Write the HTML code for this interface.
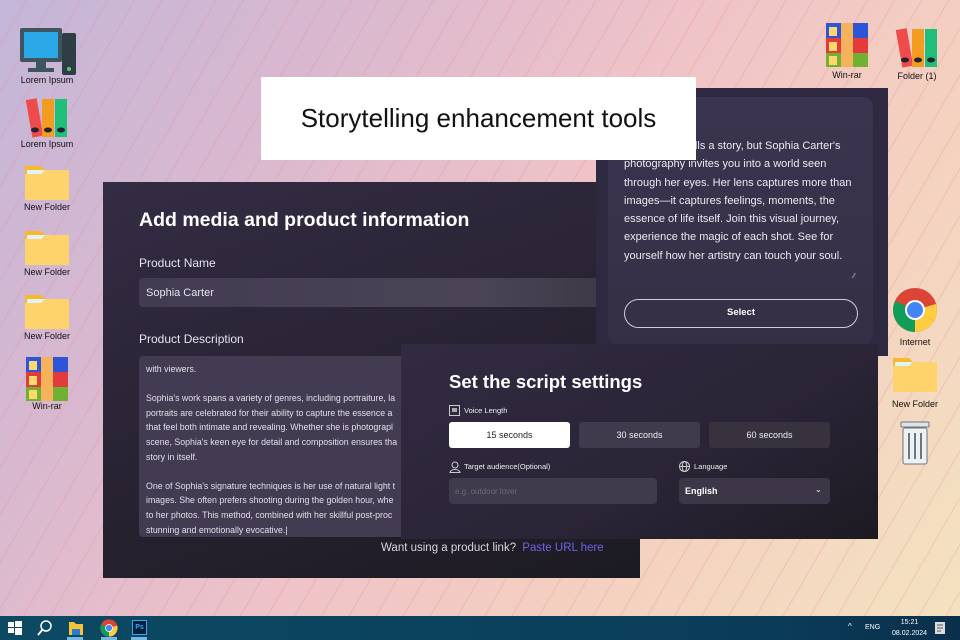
<!DOCTYPE html>
<html><head><meta charset="utf-8"><style>
*{margin:0;padding:0;box-sizing:border-box}
body{width:960px;height:640px;overflow:hidden;position:relative;font-family:"Liberation Sans",sans-serif;
background:linear-gradient(125deg,#c3b6d8 0%,#d9b8cf 25%,#efc3c8 50%,#f4cfc0 70%,#f3e3c0 100%);}
.bg{position:absolute;inset:0;opacity:.22;background:repeating-linear-gradient(120deg,transparent 0 22px,#e88a9a 22px 23.5px);}
.ic{position:absolute;text-align:center;font-size:9px;color:#111;width:70px}
.ic svg{display:block;margin:0 auto}
.p{position:absolute;color:#fff}
.main{left:103px;top:182px;width:537px;height:396px;background:linear-gradient(160deg,#342c44 0%,#26212f 60%,#1c1a22 100%)}
.lbl{position:absolute;font-size:12px;color:#e6e2ee}
.inp{position:absolute;border-radius:4px;background:linear-gradient(90deg,#423b52,#4a4456 70%,#3c3844)}
.btn{position:absolute;height:26px;top:422px;border-radius:3px;font-size:9px;text-align:center;line-height:26px;color:#eee;background:#403a4d}
.tb{position:absolute;left:0;top:616px;width:960px;height:24px;background:linear-gradient(90deg,#0c4a63,#0a3c58 80%,#0a2f4c)}
</style></head><body>
<div class="bg"></div>

<!-- left icons -->
<div class="ic" style="left:12px;top:27px"><svg width="62" height="50" viewBox="0 0 62 50"><rect x="4" y="1" width="42" height="34" rx="2" fill="#3e5560"/><rect x="8" y="5" width="34" height="26" fill="#2aa8e8"/><rect x="20" y="35" width="10" height="6" fill="#3e5560"/><rect x="12" y="41" width="26" height="4" fill="#3e5560"/><rect x="46" y="6" width="14" height="42" rx="2" fill="#2f3d44"/><circle cx="53" cy="42" r="2" fill="#5ec77a"/></svg><div style="margin-top:-2px">Lorem Ipsum</div></div>
<div class="ic" style="left:12px;top:95px"><svg width="48" height="44" viewBox="0 0 48 44"><rect x="6" y="4" width="11" height="38" fill="#ef4b4b" transform="rotate(-10 11 23)"/><rect x="19" y="4" width="12" height="38" fill="#f49b22"/><rect x="32" y="4" width="12" height="38" fill="#1fbf7a"/><ellipse cx="25" cy="35" rx="4" ry="2.5" fill="#223"/><ellipse cx="38" cy="35" rx="4" ry="2.5" fill="#223"/><ellipse cx="12" cy="35" rx="4" ry="2.5" fill="#223"/></svg><div>Lorem Ipsum</div></div>
<div class="ic" style="left:12px;top:160px"><svg width="48" height="42" viewBox="0 0 48 42"><path d="M2 6h16l4 4h24v30H2z" fill="#f7b928"/><rect x="4" y="10" width="40" height="6" fill="#dff4f8"/><path d="M2 14h16l4-4h24v30H2z" fill="#ffd36b"/></svg><div>New Folder</div></div>
<div class="ic" style="left:12px;top:225px"><svg width="48" height="42" viewBox="0 0 48 42"><path d="M2 6h16l4 4h24v30H2z" fill="#f7b928"/><rect x="4" y="10" width="40" height="6" fill="#dff4f8"/><path d="M2 14h16l4-4h24v30H2z" fill="#ffd36b"/></svg><div>New Folder</div></div>
<div class="ic" style="left:12px;top:289px"><svg width="48" height="42" viewBox="0 0 48 42"><path d="M2 6h16l4 4h24v30H2z" fill="#f7b928"/><rect x="4" y="10" width="40" height="6" fill="#dff4f8"/><path d="M2 14h16l4-4h24v30H2z" fill="#ffd36b"/></svg><div>New Folder</div></div>
<div class="ic" style="left:12px;top:355px"><svg width="46" height="46" viewBox="0 0 46 46"><rect x="2" y="2" width="42" height="15" fill="#2e55d8"/><rect x="2" y="17" width="42" height="15" fill="#e23b3b"/><rect x="2" y="32" width="42" height="14" fill="#6fb232"/><rect x="17" y="2" width="12" height="44" fill="#f5b25a"/><rect x="5" y="6" width="8" height="9" fill="#ffd76a"/><rect x="5" y="21" width="8" height="9" fill="#ffd76a"/><rect x="5" y="35" width="8" height="9" fill="#ffd76a"/></svg><div>Win-rar</div></div>

<!-- right icons -->
<div class="ic" style="left:812px;top:21px"><svg width="46" height="46" viewBox="0 0 46 46"><rect x="2" y="2" width="42" height="15" fill="#2e55d8"/><rect x="2" y="17" width="42" height="15" fill="#e23b3b"/><rect x="2" y="32" width="42" height="14" fill="#6fb232"/><rect x="17" y="2" width="12" height="44" fill="#f5b25a"/><rect x="5" y="6" width="8" height="9" fill="#ffd76a"/><rect x="5" y="21" width="8" height="9" fill="#ffd76a"/><rect x="5" y="35" width="8" height="9" fill="#ffd76a"/></svg><div style="margin-top:3px">Win-rar</div></div>
<div class="ic" style="left:882px;top:25px"><svg width="48" height="44" viewBox="0 0 48 44"><rect x="6" y="4" width="11" height="38" fill="#ef4b4b" transform="rotate(-10 11 23)"/><rect x="19" y="4" width="12" height="38" fill="#f49b22"/><rect x="32" y="4" width="12" height="38" fill="#1fbf7a"/><ellipse cx="25" cy="35" rx="4" ry="2.5" fill="#223"/><ellipse cx="38" cy="35" rx="4" ry="2.5" fill="#223"/><ellipse cx="12" cy="35" rx="4" ry="2.5" fill="#223"/></svg><div style="margin-top:2px">Folder (1)</div></div>
<div class="ic" style="left:880px;top:287px"><svg width="46" height="46" viewBox="0 0 46 46"><circle cx="23" cy="23" r="22" fill="#db4437"/><path d="M23 23 L23 45 A22 22 0 0 1 4 34 Z" fill="#0f9d58"/><path d="M23 23 L4 34 A22 22 0 0 1 3 14 Z" fill="#0f9d58"/><path d="M23 23 L42 34 A22 22 0 0 1 23 45 Z" fill="#ffcd40"/><path d="M23 23 L44 17 A22 22 0 0 1 42 34 Z" fill="#ffcd40"/><circle cx="23" cy="23" r="10" fill="#fff"/><circle cx="23" cy="23" r="8" fill="#4285f4"/></svg><div style="margin-top:4px">Internet</div></div>
<div class="ic" style="left:880px;top:352px"><svg width="48" height="42" viewBox="0 0 48 42"><path d="M2 6h16l4 4h24v30H2z" fill="#f7b928"/><rect x="4" y="10" width="40" height="6" fill="#dff4f8"/><path d="M2 14h16l4-4h24v30H2z" fill="#ffd36b"/></svg><div style="margin-top:5px">New Folder</div></div>
<div class="ic" style="left:880px;top:420px"><svg width="40" height="46" viewBox="0 0 40 46"><rect x="6" y="2" width="28" height="5" rx="1" fill="#dfe3e8" stroke="#6c7680"/><rect x="8" y="8" width="24" height="36" rx="2" fill="#eef1f4" stroke="#6c7680"/><path d="M14 13v26M20 13v26M26 13v26" stroke="#6c7680" stroke-width="2"/></svg></div>

<!-- main panel -->
<div class="p main"></div>
<div class="p" style="left:139px;top:209px;font-size:19.5px;font-weight:bold">Add media and product information</div>
<div class="lbl" style="left:139px;top:256px">Product Name</div>
<div class="inp" style="left:139px;top:278px;width:480px;height:29px"></div>
<div class="p" style="left:146px;top:287px;font-size:11px;color:#e8e4ee">Sophia Carter</div>
<div class="lbl" style="left:139px;top:332px">Product Description</div>
<div class="inp" style="left:139px;top:356px;width:290px;height:181px;background:#423b52;border-radius:4px"></div>
<div class="p" style="left:146px;top:362px;font-size:8.8px;line-height:14.6px;color:#e2dfe8;width:260px;white-space:nowrap">with viewers.<br><br>Sophia's work spans a variety of genres, including portraiture, la<br>portraits are celebrated for their ability to capture the essence a<br>that feel both intimate and revealing. Whether she is photograpl<br>scene, Sophia's keen eye for detail and composition ensures tha<br>story in itself.<br><br>One of Sophia's signature techniques is her use of natural light t<br>images. She often prefers shooting during the golden hour, whe<br>to her photos. This method, combined with her skillful post-proc<br>stunning and emotionally evocative.|</div>
<div class="p" style="left:381px;top:542px;font-size:11.5px;color:#d8d4e0">Want using a product link? <span style="color:#6f62e8;margin-left:3px">Paste URL here</span></div>

<!-- top right panel -->
<div class="p" style="left:596px;top:88px;width:292px;height:268px;background:#2e2840"></div>
<div class="p" style="left:608px;top:97px;width:265px;height:248px;border-radius:10px;background:linear-gradient(180deg,#3b3450,#352f45)"></div>
<div class="p" style="left:624px;top:137px;font-size:11px;line-height:18.3px;color:#ece9f2;white-space:nowrap">Every photo tells a story, but Sophia Carter's<br>photography invites you into a world seen<br>through her eyes. Her lens captures more than<br>images—it captures feelings, moments, the<br>essence of life itself. Join this visual journey,<br>experience the magic of each shot. See for<br>yourself how her artistry can touch your soul.</div>
<div class="p" style="left:853px;top:273px;font-size:7px;color:#aaa">⁄⁄</div>
<div class="p" style="left:624px;top:299px;width:234px;height:29px;border:1.5px solid #cfcbd8;border-radius:15px;text-align:center;line-height:26px;font-size:9.5px;font-weight:bold">Select</div>

<!-- title -->
<div class="p" style="left:261px;top:77px;width:435px;height:83px;background:#fff;color:#111;font-size:26px;text-align:center;line-height:83px">Storytelling enhancement tools</div>

<!-- script panel -->
<div class="p" style="left:401px;top:344px;width:477px;height:195px;background:linear-gradient(150deg,#322a42 0%,#2a2436 60%,#1d1a22 100%)"></div>
<div class="p" style="left:449px;top:371px;font-size:18.5px;font-weight:bold">Set the script settings</div>
<svg class="p" style="left:449px;top:405px" width="11" height="11"><rect x=".5" y=".5" width="10" height="10" fill="none" stroke="#ccc"/><rect x="3" y="3" width="5" height="4" fill="#aaa"/></svg>
<div class="p" style="left:464px;top:406px;font-size:7.5px;color:#eee">Voice Length</div>
<div class="btn" style="left:449px;width:121px;background:#fff;color:#222">15 seconds</div>
<div class="btn" style="left:579px;width:121px">30 seconds</div>
<div class="btn" style="left:709px;width:121px;background:#38323f">60 seconds</div>
<svg class="p" style="left:449px;top:461px" width="12" height="12"><circle cx="6" cy="4" r="3" fill="none" stroke="#ccc"/><path d="M1 11.5c1-4 9-4 10 0z" fill="none" stroke="#ccc"/></svg>
<div class="p" style="left:464px;top:462px;font-size:7.5px;color:#eee">Target audience(Optional)</div>
<div class="inp" style="left:449px;top:478px;width:208px;height:26px;background:#403a4d"></div>
<div class="p" style="left:455px;top:487px;font-size:8px;color:#6e6879">e.g. outdoor lover</div>
<svg class="p" style="left:679px;top:461px" width="11" height="11"><circle cx="5.5" cy="5.5" r="5" fill="none" stroke="#ccc"/><ellipse cx="5.5" cy="5.5" rx="2.2" ry="5" fill="none" stroke="#ccc"/><path d="M.5 5.5h10" stroke="#ccc"/></svg>
<div class="p" style="left:694px;top:462px;font-size:7.5px;color:#eee">Language</div>
<div class="inp" style="left:679px;top:478px;width:151px;height:26px;background:#3c3646"></div>
<div class="p" style="left:685px;top:486px;font-size:9px;font-weight:bold">English</div>
<div class="p" style="left:815px;top:485px;font-size:8px">⌄</div>

<!-- taskbar -->
<div class="tb"></div>
<svg class="p" style="left:8px;top:621px" width="14" height="14"><rect x="0" y="1" width="6" height="5" fill="#fff"/><rect x="7" y="0" width="7" height="6" fill="#fff"/><rect x="0" y="7" width="6" height="5" fill="#fff"/><rect x="7" y="7" width="7" height="7" fill="#fff"/></svg>
<svg class="p" style="left:37px;top:620px" width="16" height="16"><circle cx="9" cy="6" r="5" fill="none" stroke="#fff" stroke-width="1.5"/><path d="M5.5 9.5 1 15" stroke="#fff" stroke-width="1.8"/></svg>
<svg class="p" style="left:68px;top:620px" width="16" height="16"><path d="M1 2h5l2 2h7v11H1z" fill="#f7c23a"/><rect x="4" y="9" width="8" height="6" fill="#2a7cc7"/></svg>
<div class="p" style="left:67px;top:637px;width:16px;height:3px;background:#78b8e0"></div>
<svg class="p" style="left:100px;top:619px" width="18" height="18" viewBox="0 0 46 46"><circle cx="23" cy="23" r="22" fill="#db4437"/><path d="M23 23 L23 45 A22 22 0 0 1 4 34 Z" fill="#0f9d58"/><path d="M23 23 L4 34 A22 22 0 0 1 3 14 Z" fill="#0f9d58"/><path d="M23 23 L42 34 A22 22 0 0 1 23 45 Z" fill="#ffcd40"/><path d="M23 23 L44 17 A22 22 0 0 1 42 34 Z" fill="#ffcd40"/><circle cx="23" cy="23" r="10" fill="#fff"/><circle cx="23" cy="23" r="8" fill="#4285f4"/></svg>
<div class="p" style="left:101px;top:637px;width:16px;height:3px;background:#78b8e0"></div>
<div class="p" style="left:132px;top:620px;width:15px;height:15px;background:#001e36;border:1px solid #31a8ff;color:#31a8ff;font-size:7px;font-weight:bold;text-align:center;line-height:13px">Ps</div>
<div class="p" style="left:131px;top:637px;width:16px;height:3px;background:#78b8e0"></div>
<div class="p" style="left:848px;top:622px;font-size:8px">^</div>
<div class="p" style="left:865px;top:624px;font-size:7px">ENG</div>
<div class="p" style="left:892px;top:617px;font-size:7px;text-align:center;line-height:11px">15:21<br>08.02.2024</div>
<svg class="p" style="left:934px;top:621px" width="12" height="14"><path d="M1 1h10v12H1z" fill="#ddd"/><path d="M3 4h6M3 7h6M3 10h4" stroke="#555"/></svg>
</body></html>
